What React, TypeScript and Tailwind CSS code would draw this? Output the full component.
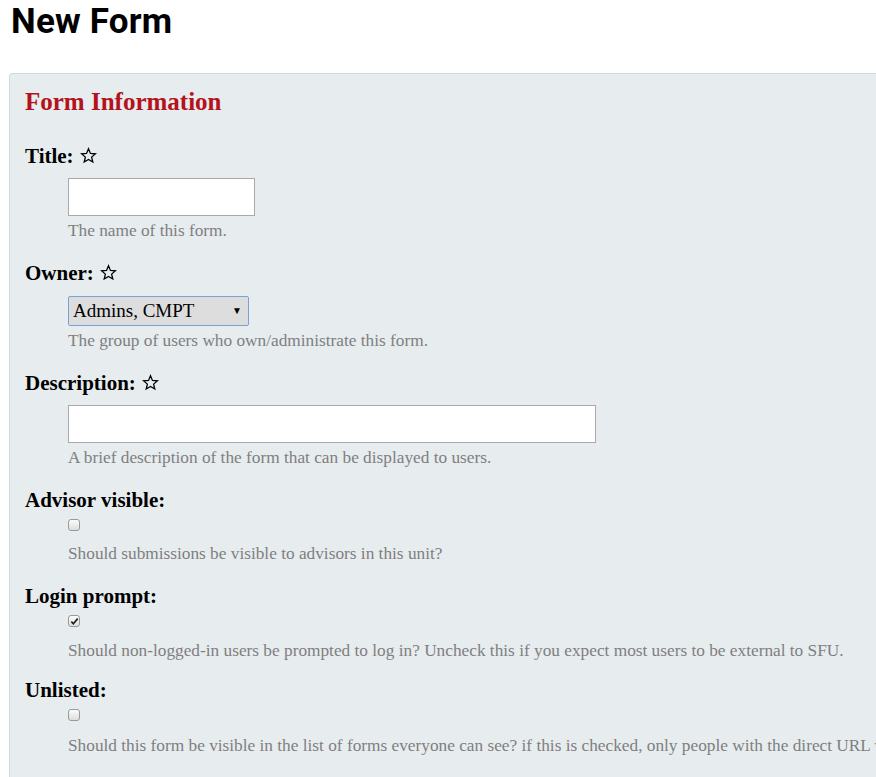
import React from "react"

function Star() {
  return (
    <svg
      viewBox="0 0 24 24"
      className="ml-[6px] inline-block h-[17px] w-[17px] align-[-1px]"
      fill="none"
      stroke="#000"
      strokeWidth={1.8}
      strokeLinejoin="miter"
    >
      <path d="M12 2.5l2.75 6.6 7.05.55-5.38 4.62 1.66 6.93L12 17.5l-6.08 3.7 1.66-6.93L2.2 9.65l7.05-.55z" />
    </svg>
  )
}

function Checkbox({ checked }: { checked?: boolean }) {
  return (
    <span className="flex h-[12px] w-[12px] items-center justify-center rounded-[3px] border border-[#9a9a9a] bg-gradient-to-b from-[#fbfbfb] to-[#dedede]">
      {checked && (
        <svg viewBox="0 0 10 10" className="h-[9px] w-[9px]">
          <path d="M1.5 5.2l2.2 2.3L8.6 1.8" fill="none" stroke="#222" strokeWidth={1.9} />
        </svg>
      )}
    </span>
  )
}

function Label({ text, star }: { text: string; star?: boolean }) {
  return (
    <div className="text-[21px] font-bold leading-[24px] text-black">
      {text}
      {star && <Star />}
    </div>
  )
}

function Help({ children }: { children: React.ReactNode }) {
  return <div className="ml-[43px] whitespace-nowrap text-[17.3px] leading-[20px] text-[#7f7f7f]">{children}</div>
}

export default function App() {
  return (
    <div className="h-[777px] w-[876px] overflow-hidden bg-white">
      <h1 className="ml-[11px] mt-[2px] font-['Roboto',sans-serif] text-[35px] font-bold leading-[40px] tracking-[0.2px] text-black">
        New Form
      </h1>

      <div className="ml-[9px] mt-[31px] w-[1100px] rounded-tl-[3px] border border-[#cddbe1] bg-[#e7ecef] pb-[40px] pl-[15px] pt-[13px] font-['Liberation_Serif',serif]">
        <h2 className="text-[25px] font-bold leading-[30px] text-[#b4121c]">Form Information</h2>

        {/* Title */}
        <div className="mt-[27px]">
          <Label text="Title:" star />
          <div className="ml-[43px] mt-[10px] h-[38px] w-[187px] border border-[#a9a9a9] bg-white" />
          <div className="mt-[5px]">
            <Help>The name of this form.</Help>
          </div>
        </div>

        {/* Owner */}
        <div className="mt-[20px]">
          <Label text="Owner:" star />
          <div className="ml-[43px] mt-[11px] flex h-[30px] w-[181px] items-center justify-between rounded-[2px] border border-[#7b9fd8] bg-[#dddddd] pl-[4px] pr-[6px] text-[19px] leading-[20px] text-black">
            <span>Admins, CMPT</span>
            <span className="text-[10px]">▼</span>
          </div>
          <div className="mt-[5px]">
            <Help>The group of users who own/administrate this form.</Help>
          </div>
        </div>

        {/* Description */}
        <div className="mt-[20px]">
          <Label text="Description:" star />
          <div className="ml-[43px] mt-[10px] h-[38px] w-[528px] border border-[#a9a9a9] bg-white" />
          <div className="mt-[5px]">
            <Help>A brief description of the form that can be displayed to users.</Help>
          </div>
        </div>

        {/* Advisor visible */}
        <div className="mt-[20px]">
          <Label text="Advisor visible:" />
          <div className="ml-[43px] mt-[7px]">
            <Checkbox />
          </div>
          <div className="mt-[13px]">
            <Help>Should submissions be visible to advisors in this unit?</Help>
          </div>
        </div>

        {/* Login prompt */}
        <div className="mt-[20px]">
          <Label text="Login prompt:" />
          <div className="ml-[43px] mt-[7px]">
            <Checkbox checked />
          </div>
          <div className="mt-[14px]">
            <Help>Should non-logged-in users be prompted to log in? Uncheck this if you expect most users to be external to SFU.</Help>
          </div>
        </div>

        {/* Unlisted */}
        <div className="mt-[17px]">
          <Label text="Unlisted:" />
          <div className="ml-[43px] mt-[7px]">
            <Checkbox />
          </div>
          <div className="mt-[15px]">
            <Help>
              Should this form be visible in the list of forms everyone can see? if this is checked, only people with the direct URL will be able to see it.
            </Help>
          </div>
        </div>
      </div>
    </div>
  )
}
